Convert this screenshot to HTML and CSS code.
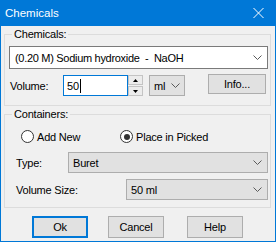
FILE: index.html
```html
<!DOCTYPE html>
<html>
<head>
<meta charset="utf-8">
<link rel="stylesheet" href="styles.css">
</head>
<body>
<div class="window">
  <div class="titlebar">
    <span class="title">Chemicals</span>
    <svg class="close" width="11" height="10" viewBox="0 0 11 10"><path d="M0.5 0L10.5 10M10.5 0L0.5 10" stroke="#fff" stroke-width="1"/></svg>
  </div>
  <div class="client">
    <fieldset class="group group-chem">
      <legend>Chemicals:</legend>
      <div class="combo combo-edit combo-chem">
        <span class="combo-text chem-text">(0.20 M) Sodium hydroxide  -  NaOH</span>
        <svg class="chev" width="9" height="5" viewBox="0 0 9 5"><polyline points="0.5,0.5 4.5,4.5 8.5,0.5" fill="none" stroke="#5a5a5a" stroke-width="1"/></svg>
      </div>
      <div class="row row-volume">
        <span class="label label-volume">Volume:</span>
        <div class="textbox">50<span class="caret"></span></div>
        <div class="spin">
          <div class="spin-btn"><svg width="5" height="3" viewBox="0 0 5 3"><polygon points="2.5,0 5,3 0,3" fill="#000"/></svg></div>
          <div class="spin-btn"><svg width="5" height="3" viewBox="0 0 5 3"><polygon points="0,0 5,0 2.5,3" fill="#000"/></svg></div>
        </div>
        <div class="combo combo-list combo-unit">
          <span class="combo-text">ml</span>
          <svg class="chev" width="9" height="5" viewBox="0 0 9 5"><polyline points="0.5,0.5 4.5,4.5 8.5,0.5" fill="none" stroke="#5a5a5a" stroke-width="1"/></svg>
        </div>
        <div class="button button-info">Info...</div>
      </div>
    </fieldset>
    <fieldset class="group group-cont">
      <legend>Containers:</legend>
      <div class="row row-radios">
        <label class="radio radio-add"><span class="radio-circle"></span>Add New</label>
        <label class="radio radio-place"><span class="radio-circle checked"><span class="radio-dot"></span></span>Place in Picked</label>
      </div>
      <div class="row row-type">
        <span class="label label-type">Type:</span>
        <div class="combo combo-list combo-type">
          <span class="combo-text">Buret</span>
          <svg class="chev" width="9" height="5" viewBox="0 0 9 5"><polyline points="0.5,0.5 4.5,4.5 8.5,0.5" fill="none" stroke="#5a5a5a" stroke-width="1"/></svg>
        </div>
      </div>
      <div class="row row-size">
        <span class="label label-size">Volume Size:</span>
        <div class="combo combo-list combo-size">
          <span class="combo-text">50 ml</span>
          <svg class="chev" width="9" height="5" viewBox="0 0 9 5"><polyline points="0.5,0.5 4.5,4.5 8.5,0.5" fill="none" stroke="#5a5a5a" stroke-width="1"/></svg>
        </div>
      </div>
    </fieldset>
    <div class="buttons">
      <div class="button button-ok">Ok</div>
      <div class="button button-cancel">Cancel</div>
      <div class="button button-help">Help</div>
    </div>
  </div>
</div>
</body>
</html>
```
FILE: styles.css
```css
* { box-sizing: border-box; }
html, body { margin: 0; padding: 0; }
body {
  width: 276px;
  height: 242px;
  overflow: hidden;
  background: #0078d7;
  font-family: "Liberation Sans", Arial, sans-serif;
  font-size: 11px;
  letter-spacing: -0.2px;
  color: #000;
}
.window {
  width: 276px;
  height: 242px;
  background: #0078d7;
  padding: 0 1px 1px 1px;
  display: flex;
  flex-direction: column;
}
.titlebar {
  height: 26px;
  flex: none;
  display: flex;
  align-items: center;
  justify-content: space-between;
  padding: 0 11px 0 4px;
  color: #fff;
}
.title {
  font-size: 11.5px;
  letter-spacing: 0;
}
.close { display: block; }
.client {
  flex: 1;
  background: #f0f0f0;
  padding-top: 2px;
  display: flex;
  flex-direction: column;
}
.group {
  margin: 0 4px 0 3px;
  padding: 0;
  border: 1px solid #dcdcdc;
  min-width: 0;
}
.group legend {
  margin-left: 7px;
  padding: 0 2px;
  line-height: 13px;
  font-size: 11px;
}
.group-chem { padding-bottom: 9px; }
.group-cont { margin-top: 2px; padding-bottom: 7px; }

.row {
  display: flex;
  align-items: center;
  height: 21px;
}
.combo {
  display: flex;
  align-items: center;
  justify-content: space-between;
  white-space: nowrap;
}
.chem-text {
  white-space: pre;
  letter-spacing: -0.3px;
}
.combo .chev { display: block; flex: none; }
.combo-edit {
  background: #fff;
  border: 1px solid #7a7a7a;
  padding: 0 5px 0 5px;
}
.combo-list {
  background: #e1e1e1;
  border: 1px solid #adadad;
  padding: 0 5px 0 4px;
  height: 21px;
}
.combo-chem {
  margin: 5px 0 0 4px;
  width: 259px;
  height: 23px;
}
.row-volume { margin-top: 6px; }
.label-volume { margin-left: 5px; width: 53px; }
.textbox {
  width: 65px;
  height: 21px;
  border: 1px solid #0078d7;
  background: #fff;
  padding-left: 3px;
  display: flex;
  align-items: center;
}
.caret {
  display: inline-block;
  width: 1px;
  height: 14px;
  background: #000;
  margin-left: 1px;
}
.spin {
  width: 15px;
  height: 21px;
  display: flex;
  flex-direction: column;
  gap: 1px;
}
.spin-btn {
  flex: 1;
  background: #ececec;
  border: 1px solid #c4c4c4;
  display: flex;
  align-items: center;
  justify-content: center;
}
.spin-btn svg { display: block; }
.combo-unit {
  margin-left: 6px;
  width: 36px;
  padding-right: 4px;
}
.button {
  background: #e1e1e1;
  border: 1px solid #adadad;
  display: flex;
  align-items: center;
  justify-content: center;
}
.button-info {
  margin-left: 23px;
  width: 58px;
  height: 20px;
  align-self: flex-start;
  margin-top: -1px;
}

.row-radios { margin-top: 9px; height: 13px; }
.radio {
  display: flex;
  align-items: center;
  gap: 3px;
  height: 13px;
}
.radio-add { margin-left: 16px; width: 99px; }
.radio-circle {
  width: 13px;
  height: 13px;
  border: 1px solid #333;
  border-radius: 50%;
  background: #fff;
  display: flex;
  align-items: center;
  justify-content: center;
  flex: none;
}
.radio-dot {
  width: 6px;
  height: 6px;
  border-radius: 50%;
  background: #333;
}
.row-type { margin-top: 9px; }
.label-type { margin-left: 11px; width: 52px; }
.combo-type { width: 200px; }
.row-size { margin-top: 6px; }
.label-size { margin-left: 11px; width: 110px; }
.combo-size { width: 142px; }

.buttons {
  margin-top: 8px;
  display: flex;
  height: 22px;
}
.buttons .button { width: 56px; height: 22px; }
.button-ok { margin-left: 31px; border: 2px solid #0078d7; }
.button-cancel { margin-left: 20px; }
.button-help { margin-left: 23px; }
```
